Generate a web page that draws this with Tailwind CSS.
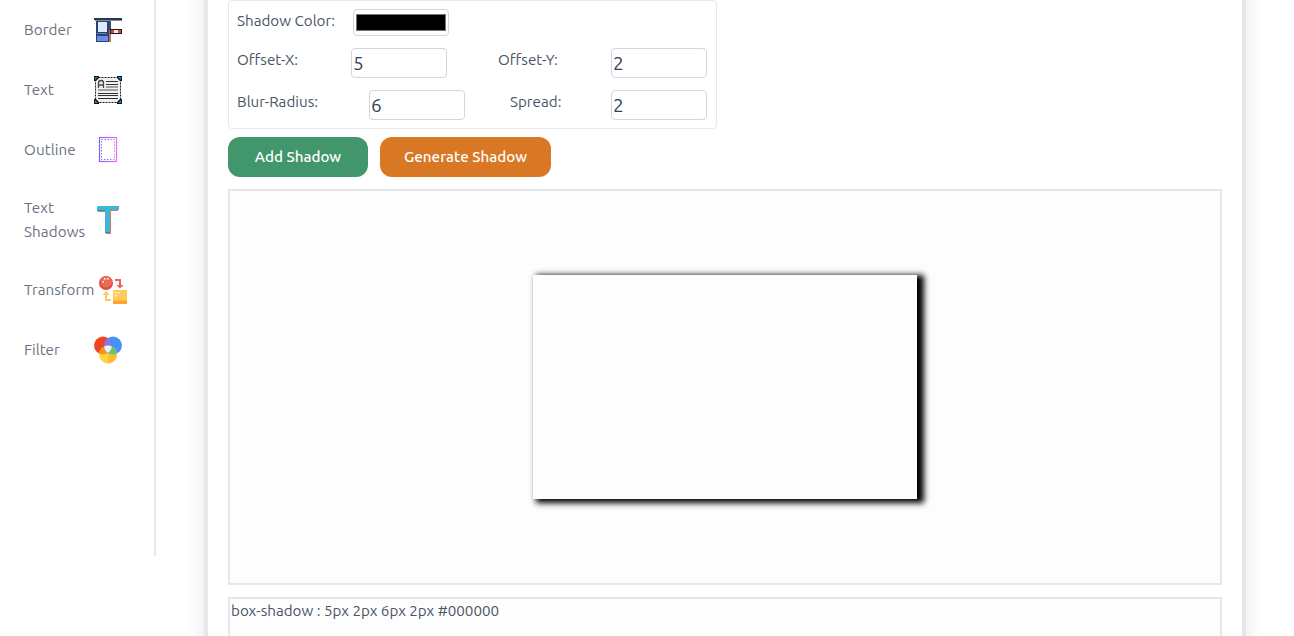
<!DOCTYPE html>
<html lang="en">
<head>
<meta charset="utf-8">
<title>Box Shadow Generator</title>
<script src="https://cdn.jsdelivr.net/npm/@tailwindcss/browser@4"></script>
</head>
<body class="h-[636px] overflow-hidden bg-white font-[Ubuntu,'Noto_Sans',sans-serif] text-[15.2px] leading-6 text-gray-600">
<div class="flex h-[636px]">
  <aside class="h-[556px] w-[156px] shrink-0 border-r-2 border-[#e5e7eb] pl-6 text-gray-500">
    <div class="flex h-[60px] items-center"><span class="w-[70px] tracking-[0.1px]">Border</span>
      <svg class="size-7 shrink-0" viewBox="0 0 28 28"><path fill="#29364e" d="M0 2h28v2H0z"/><path fill="#7c8ca8" d="M1 4h27v1H1z"/><path fill="#2b4170" d="M2 5h14v21H2z"/><path fill="#dfeafa" d="M4 6h9v10H4z"/><path fill="#5c80c9" d="M3 17h10v1H3z"/><path fill="#658fe9" d="M3 20h11v5H3z"/><path fill="#394d76" d="M15 5h2v21h-2z"/><path fill="#a87965" d="M15 14h2v12h-2z"/><path fill="#181b20" d="M16 13h12v5H16z"/><path fill="#e4452b" d="M17 14h3v3h-3zM24 14h3v3h-3z"/><path fill="#eee" d="M20 14h4v3h-4z"/></svg></div>
    <div class="flex h-[60px] items-center"><span class="w-[70px]">Text</span>
      <svg class="size-7 shrink-0" viewBox="0 0 28 28"><rect x="2" y="2" width="24" height="24" rx="3" fill="#f0f0f0"/><rect x="1.5" y="1.5" width="25" height="25" fill="none" stroke="#1b1b1b" stroke-dasharray="2 1"/><path fill="#101820" d="M0 0h5v2L2 5H0zM28 0h-5v2l3 3h2zM0 28h5v-2l-3-3H0zM28 28h-5v-2l3-3h2z"/><path fill="#1687c9" d="M1 1h3L1 4zM27 1h-3l3 3zM1 27h3l-3-3zM27 27h-3l3-3z"/><path fill="none" stroke="#444" stroke-width="1.3" d="M4.5 12V7q0-2.5 2.5-2.5T9.500 7v5M4.500 9h5"/><path stroke="#333" d="M12 5.500h12M12 8.500h12M4 17.500h20M4 19.500h20M4 22.500h20"/><path stroke="#888" stroke-width="1.500" d="M12 11h12M4 14h20"/></svg></div>
    <div class="flex h-[60px] items-center"><span class="w-[70px] tracking-[0.1px]">Outline</span>
      <svg class="size-7 shrink-0" viewBox="0 0 28 28"><defs><linearGradient id="og"><stop stop-color="#8065f7"/><stop offset="1" stop-color="#e173f8"/></linearGradient></defs><rect x="5.500" y="1.500" width="17" height="24" fill="none" stroke="url(#og)" stroke-width="1.200"/><rect x="7.500" y="3.500" width="13" height="20" fill="none" stroke="url(#og)" stroke-dasharray="1.500 1.500"/></svg></div>
    <div class="flex h-20 items-center"><span class="w-[70px] tracking-[0.1px]">Text<br>Shadows</span>
      <svg class="size-7 shrink-0 overflow-visible" viewBox="0 0 28 28"><path fill="#e56f6d" d="M4 0h21v4h-1v1h-7v23h-5V6H4z"/><path fill="#3cb8d5" d="M3.500 0h21q0 4-.7 4h-7.800v23h-5V4.500H3q-.5-2 .5-4.500z"/><path fill="#2c93ad" d="M3 4h8v1H3zM11 26h5v1h-5z"/></svg></div>
    <div class="flex h-[60px] items-center"><span class="w-[75px]">Transform</span>
      <svg class="size-7 shrink-0" viewBox="0 0 28 28"><circle cx="7" cy="7" r="7" fill="#da4e3b"/><circle cx="7.200" cy="6" r="5.800" fill="#e96c55"/><path fill="#fff" d="M5 2h1.500v1.500H5zM8 2h1.500v1.500H8zM3.500 5H5v1.500H3.500z"/><path fill="#e76852" d="M16 3h6v6h2.500L21 12.500 17.500 9H20V5h-4z"/><path fill="#ffca56" d="M14 14h14v11H14zM7 15l3.500 4H8v4h4v2H6v-6H3.500z"/><path fill="#faa62f" d="M14 24.500h14V28H14z"/><path fill="#fff" d="M16 16h1.500v1.500H16zM19 16h1.500v1.500H19zM16 19h1.500v1.500H16z"/></svg></div>
    <div class="flex h-[60px] items-center"><span class="w-[70px]">Filter</span>
      <svg class="size-7 shrink-0" viewBox="0 0 28 28"><defs><clipPath id="cr"><circle cx="9" cy="9.500" r="9"/></clipPath><clipPath id="cb"><circle cx="19" cy="9.500" r="9"/></clipPath></defs><circle cx="9" cy="9.500" r="9" fill="#f04427"/><circle cx="19" cy="9.500" r="9" fill="#4790fb"/><circle cx="14" cy="18.500" r="9" fill="#ffd43c"/><path fill="#fdbd35" d="M14 9.500a9 9 0 0 1 0 18z"/><g clip-path="url(#cr)"><circle cx="19" cy="9.500" r="9" fill="#8278e8"/><circle cx="14" cy="18.500" r="9" fill="#f7922b"/></g><g clip-path="url(#cb)"><circle cx="14" cy="18.500" r="9" fill="#63c66b"/><g clip-path="url(#cr)"><circle cx="14" cy="18.500" r="9" fill="#edf1fa"/></g></g></svg></div>
  </aside>
  <main class="-mt-5 ml-12 h-[720px] w-[1042px] shrink-0 border-x-4 border-[#e5e7eb] px-5 pt-5 shadow-[0_0_20px_rgba(0,0,0,0.1)]">
    <section class="h-[129px] w-[489px] rounded border border-[#e5e7eb] px-2">
      <div class="flex h-[39px] pt-2">
        <label class="w-[116px] whitespace-nowrap">Shadow Color:</label>
        <div class="h-[27px] w-24 rounded border border-gray-300 px-[2px] py-1"><div class="h-[17px] border border-[#777] bg-black"></div></div>
      </div>
      <div class="flex h-[42px] pt-2">
        <label class="w-[114px]">Offset-X:</label>
        <input class="h-[30px] w-24 rounded border border-gray-300 px-px text-[19px] text-gray-700" value="5">
        <label class="ml-[51px] w-[113px]">Offset-Y:</label>
        <input class="h-[30px] w-24 rounded border border-gray-300 px-px text-[19px] text-gray-700" value="2">
      </div>
      <div class="flex h-[42px] pt-2">
        <label class="w-[132px]">Blur-Radius:</label>
        <input class="h-[30px] w-24 rounded border border-gray-300 px-px text-[19px] text-gray-700" value="6">
        <label class="ml-[45px] w-[101px]">Spread:</label>
        <input class="h-[30px] w-24 rounded border border-gray-300 px-px text-[19px] text-gray-700" value="2">
      </div>
    </section>
    <div class="mt-2 flex gap-3 font-medium text-white">
      <button class="h-10 w-[140px] rounded-xl bg-[#41966c]">Add Shadow</button>
      <button class="h-10 w-[171px] rounded-xl bg-[#d87824]">Generate Shadow</button>
    </div>
    <div class="mt-3 flex h-[396px] items-center justify-center border-2 border-[#e5e7eb] bg-[#fdfdfd]">
      <div class="h-56 w-96 bg-[#fdfdfd] shadow-[5px_2px_6px_2px_#000000]"></div>
    </div>
    <div class="mt-3 h-24 border-2 border-[#e5e7eb] bg-[#fdfdfd] pl-px">box-shadow : 5px 2px 6px 2px #000000</div>
  </main>
</div>
</body>
</html>
